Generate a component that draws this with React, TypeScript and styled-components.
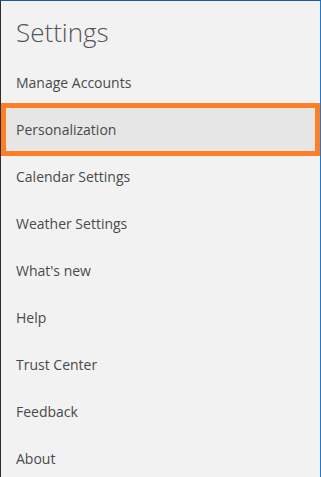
import styled, { createGlobalStyle } from 'styled-components';
import type { FC } from 'react';

const GlobalStyle = createGlobalStyle`
  html, body {
    margin: 0;
    padding: 0;
    background: #f2f2f2;
  }
`;

const Pane = styled.div`
  box-sizing: border-box;
  width: 321px;
  height: 477px;
  overflow: hidden;
  background: #f2f2f2;
  border-top: 1px solid #1d5a9c;
  border-left: 1px solid #2e2e2e;
  border-right: 1px solid #1a7bd6;
  font-family: 'Segoe UI', 'Open Sans', 'Noto Sans', sans-serif;
  color: #4a4a4a;
`;

const Title = styled.h1`
  margin: 0;
  padding: 14px 0 0 15px;
  height: 44px;
  font-size: 26px;
  font-weight: 300;
  line-height: 34px;
  color: #555555;
`;

const Menu = styled.ul`
  list-style: none;
  margin: 0;
  padding: 0;
  display: flex;
  flex-direction: column;
`;

const Item = styled.li<{ $active?: boolean }>`
  box-sizing: border-box;
  height: ${(p) => (p.$active ? '53px' : '47px')};
  margin: ${(p) => (p.$active ? '-3px 0' : '0')};
  display: flex;
  align-items: center;
  padding-left: 15px;
  font-size: 14px;
  color: #4a4a4a;
  background: ${(p) => (p.$active ? '#e6e6e6' : 'transparent')};
  box-shadow: ${(p) => (p.$active ? 'inset 0 0 0 5px #ff7f27' : 'none')};
`;

const items = [
  'Manage Accounts',
  'Personalization',
  'Calendar Settings',
  'Weather Settings',
  "What's new",
  'Help',
  'Trust Center',
  'Feedback',
  'About',
];

const App: FC = () => {
  return (
    <>
      <GlobalStyle />
      <Pane>
        <Title>Settings</Title>
        <Menu>
          {items.map((label) => (
            <Item key={label} $active={label === 'Personalization'}>
              {label}
            </Item>
          ))}
        </Menu>
      </Pane>
    </>
  );
};

export default App;
